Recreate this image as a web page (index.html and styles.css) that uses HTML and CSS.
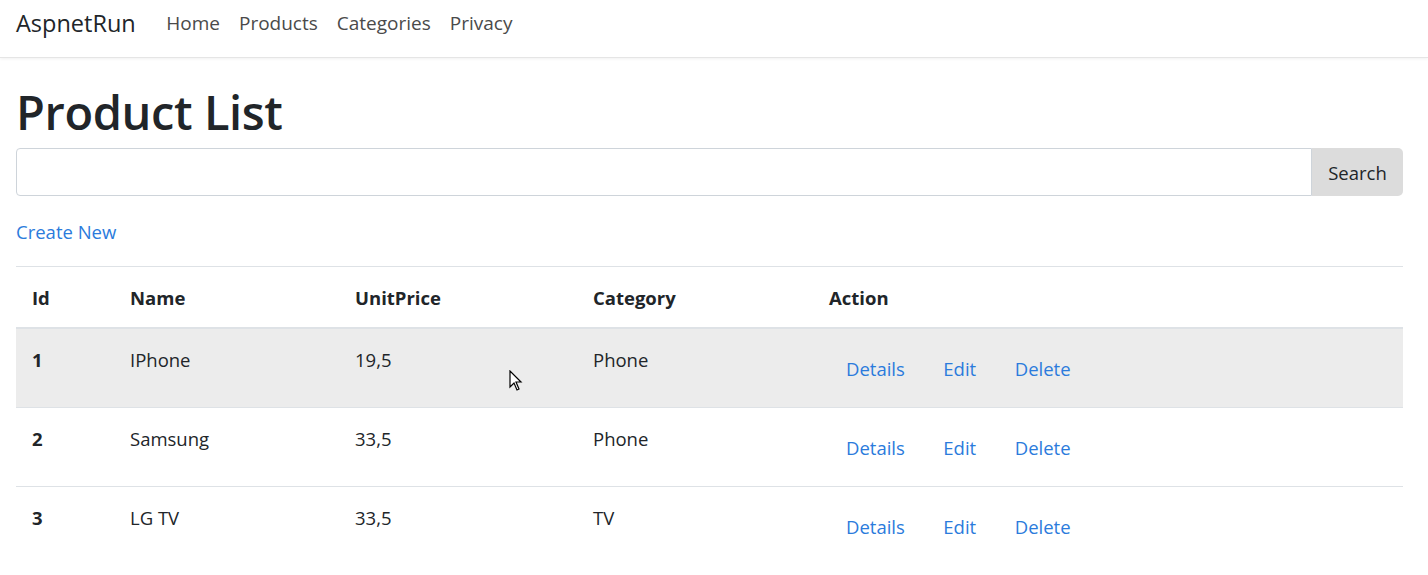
FILE: index.html
```html
<!DOCTYPE html>
<html lang="en">
<head>
<meta charset="utf-8">
<title>Product List - AspnetRun</title>
<link rel="stylesheet" href="styles.css">
</head>
<body>
<header class="navbar">
  <a class="brand" href="#">AspnetRun</a>
  <nav class="nav">
    <a href="#">Home</a>
    <a href="#">Products</a>
    <a href="#">Categories</a>
    <a href="#">Privacy</a>
  </nav>
</header>
<main class="container">
  <h1 class="title">Product List</h1>
  <form class="search">
    <input class="search-input" type="text">
    <button class="search-btn" type="button">Search</button>
  </form>
  <p class="create"><a href="#">Create New</a></p>
  <table class="table">
    <thead>
      <tr>
        <th class="c-id">Id</th>
        <th class="c-name">Name</th>
        <th class="c-price">UnitPrice</th>
        <th class="c-cat">Category</th>
        <th>Action</th>
      </tr>
    </thead>
    <tbody>
      <tr class="hover">
        <th>1</th><td>IPhone</td><td>19,5</td><td>Phone</td>
        <td class="actions"><a href="#">Details</a><a href="#">Edit</a><a href="#">Delete</a></td>
      </tr>
      <tr>
        <th>2</th><td>Samsung</td><td>33,5</td><td>Phone</td>
        <td class="actions"><a href="#">Details</a><a href="#">Edit</a><a href="#">Delete</a></td>
      </tr>
      <tr>
        <th>3</th><td>LG TV</td><td>33,5</td><td>TV</td>
        <td class="actions"><a href="#">Details</a><a href="#">Edit</a><a href="#">Delete</a></td>
      </tr>
    </tbody>
  </table>
</main>
<svg class="cursor" width="14" height="22" viewBox="0 0 14 22"><path d="M1 1 L1 17 L5 13 L8 20 L10 19 L7 12 L12 12 Z" fill="#fff" stroke="#000" stroke-width="1.2" stroke-linejoin="miter"/></svg>
</body>
</html>
```

FILE: styles.css
```css
* { box-sizing: border-box; }
html, body { margin: 0; padding: 0; }
body {
  font-family: "Open Sans", "Noto Sans", sans-serif;
  font-size: 18.5px;
  color: #212529;
  background: #fff;
  position: relative;
  height: 575px;
  overflow: hidden;
}
a { text-decoration: none; }

.navbar {
  display: flex;
  align-items: center;
  height: 58px;
  padding: 0 16px;
  border-bottom: 1px solid #e5e5e5;
  box-shadow: 0 1px 3px rgba(0,0,0,.06);
}
.brand {
  font-size: 23.5px;
  color: #212529;
  margin-right: 21px;
  line-height: 30px;
  margin-top: -12px;
}
.nav { display: flex; margin-top: -12px; }
.nav a {
  color: #4a4a4a;
  font-size: 19px;
  padding: 0 9.5px;
  line-height: 30px;
}

.container { padding: 0 25px 0 16px; }
.title {
  font-size: 47px;
  font-weight: 600;
  margin: 19px 0 0;
  line-height: 71px;
  letter-spacing: -0.4px;
}
.search { display: flex; margin-top: 0; }
.search-input {
  flex: 1;
  height: 48px;
  border: 1px solid #ced4da;
  border-radius: 4px 0 0 4px;
  font: inherit;
  padding: 0 12px;
  margin: 0;
}
.search-btn {
  width: 91px;
  height: 48px;
  border: none;
  background: #dcdcdc;
  border-radius: 0 5px 5px 0;
  font: inherit;
  font-size: 18.5px;
  color: #212529;
  margin: 0;
  padding: 0;
}
.create { margin: 24px 0 22px; line-height: 24px; }
.create a { color: #2b7bdc; }

.table { width: 100%; border-collapse: collapse; }
.table th, .table td {
  text-align: left;
  vertical-align: top;
  padding: 18px 16px 19px;
  line-height: 26px;
  border-top: 1px solid #dee2e6;
}
.table thead th {
  font-weight: 700;
  border-bottom: 2px solid #dee2e6;
  padding: 18px 16px 16px;
}
.table tbody td, .table tbody th { height: 79px; padding-top: 18px; }
.table tbody th { font-weight: 700; }
.c-id { width: 98px; }
.c-name { width: 225px; }
.c-price { width: 238px; }
.c-cat { width: 236px; }
tr.hover { background: #ececec; }
.actions { padding-top: 23px !important; }
.actions a {
  color: #2b7bdc;
  display: inline-block;
  padding: 4px 17px;
  margin-right: 4.5px;
}

.cursor { position: absolute; left: 509px; top: 370px; }
```
